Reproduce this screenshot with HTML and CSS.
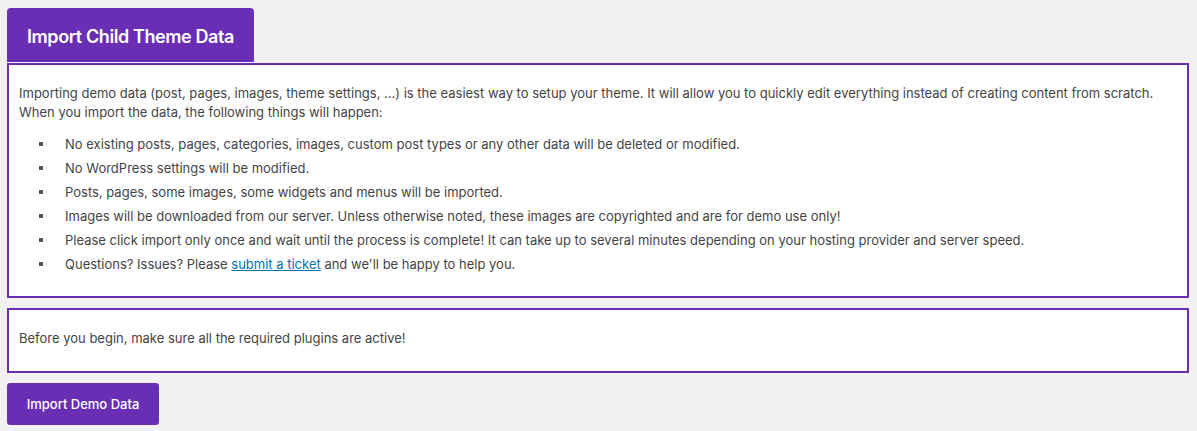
FILE: index.html
```html
<!DOCTYPE html>
<html>
<head>
<meta charset="utf-8">
<link rel="stylesheet" href="styles.css">
</head>
<body>
<div class="wrap">
  <div class="tab">Import Child Theme Data</div>
  <div class="box box-main">
    <p>Importing demo data (post, pages, images, theme settings, ...) is the easiest way to setup your theme. It will allow you to quickly edit everything instead of creating content from scratch. When you import the data, the following things will happen:</p>
    <ul class="list">
      <li>No existing posts, pages, categories, images, custom post types or any other data will be deleted or modified.</li>
      <li>No WordPress settings will be modified.</li>
      <li>Posts, pages, some images, some widgets and menus will be imported.</li>
      <li>Images will be downloaded from our server. Unless otherwise noted, these images are copyrighted and are for demo use only!</li>
      <li>Please click import only once and wait until the process is complete! It can take up to several minutes depending on your hosting provider and server speed.</li>
      <li>Questions? Issues? Please <a href="#" class="link">submit a ticket</a> and we'll be happy to help you.</li>
    </ul>
  </div>
  <div class="box box-note">
    <p>Before you begin, make sure all the required plugins are active!</p>
  </div>
  <button class="btn">Import Demo Data</button>
</div>
</body>
</html>
```

FILE: styles.css
```css
html, body {
  margin: 0;
  padding: 0;
  background: #f1f1f1;
}
body {
  font-family: Inter, "Liberation Sans", Arial, sans-serif;
  font-size: 13px;
  color: #444;
}
.wrap {
  padding: 8px 8px 0 7px;
}
.tab {
  display: inline-block;
  box-sizing: border-box;
  width: 247px;
  height: 54px;
  line-height: 58px;
  text-align: center;
  background: #6a2eb4;
  color: #fff;
  font-weight: 600;
  font-size: 18px;
  letter-spacing: -0.4px;
  border-radius: 4px 4px 0 0;
  margin-bottom: 1px;
  vertical-align: top;
}
.box {
  background: #fff;
  border: 2px solid #6a2eb4;
  padding: 5px 10px 10px 10px;
}
.box p {
  margin: 14px 0 13px;
  line-height: 19px;
}
.list {
  margin: 13px 0;
  padding-left: 46px;
  list-style: none;
}
.list li {
  line-height: 18px;
  margin-bottom: 6px;
  padding-left: 0;
}
.list li::before {
  content: "";
  display: inline-block;
  width: 4px;
  height: 4px;
  background: #555;
  margin-left: -26px;
  margin-right: 22px;
  vertical-align: 3px;
}
.link {
  color: #0073aa;
  text-decoration: underline;
}
.box-note {
  margin-top: 10px;
}
.btn {
  margin-top: 10px;
  width: 152px;
  height: 42px;
  background: #6a2eb4;
  color: #fff;
  border: none;
  border-radius: 3px;
  font-family: Inter, "Liberation Sans", Arial, sans-serif;
  font-size: 13px;
  font-weight: 500;
  padding: 0;
  cursor: pointer;
}
```
